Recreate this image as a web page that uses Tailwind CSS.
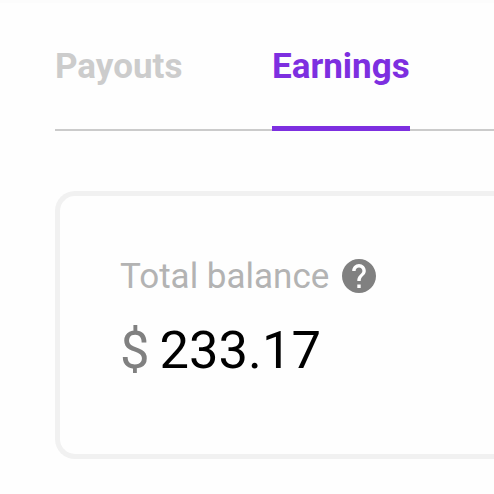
<!DOCTYPE html>
<html lang="en"><head><meta charset="utf-8"><title>Earnings</title>
<script src="https://cdn.jsdelivr.net/npm/@tailwindcss/browser@4"></script></head>
<body class="h-screen overflow-hidden bg-[#fefefe] font-['Roboto',sans-serif]">
<div class="h-[3px] bg-[#fcfcfc]"></div>
<nav class="ml-[55px] flex h-[128px] gap-[90px] border-b-2 border-[#cbcbcb] text-[35px] leading-[42px] font-bold">
<a class="w-[127px] pt-[43px] text-[#cccccc]">Payouts</a>
<a class="h-[128px] w-[138px] border-b-[5px] border-[#7d2fe0] pt-[43px] text-[#7d2fe0]">Earnings</a>
</nav>
<main class="mt-[60px] ml-[55px] h-[268px] rounded-l-[20px] border-[5px] border-r-0 border-[#f1f1f1] pt-[59px] pl-[60px]">
<div class="flex h-[42px] items-center gap-[13px]"><span class="pt-[2px] text-[35px] leading-[42px] text-[#b3b3b3]">Total balance</span>
<svg class="size-[34px]" viewBox="2 2 20 20" fill="#808080"><path d="M12 2C6.480 2 2 6.480 2 12s4.480 10 10 10 10-4.480 10-10S17.520 2 12 2zm1 17h-2v-2h2v2zm2.070-7.750l-.9.920C13.450 12.900 13 13.500 13 15h-2v-.5c0-1.100.450-2.100 1.170-2.830l1.240-1.260c.370-.360.590-.860.590-1.410 0-1.100-.9-2-2-2s-2 .9-2 2H8c0-2.210 1.790-4 4-4s4 1.790 4 4c0 .880-.360 1.680-.930 2.250z"/></svg></div>
<div class="mt-[21px] flex gap-[10px] text-[52.5px] leading-[64px]"><span class="text-[#808080]">$</span><span class="text-black">233.17</span></div>
</main>
</body></html>
